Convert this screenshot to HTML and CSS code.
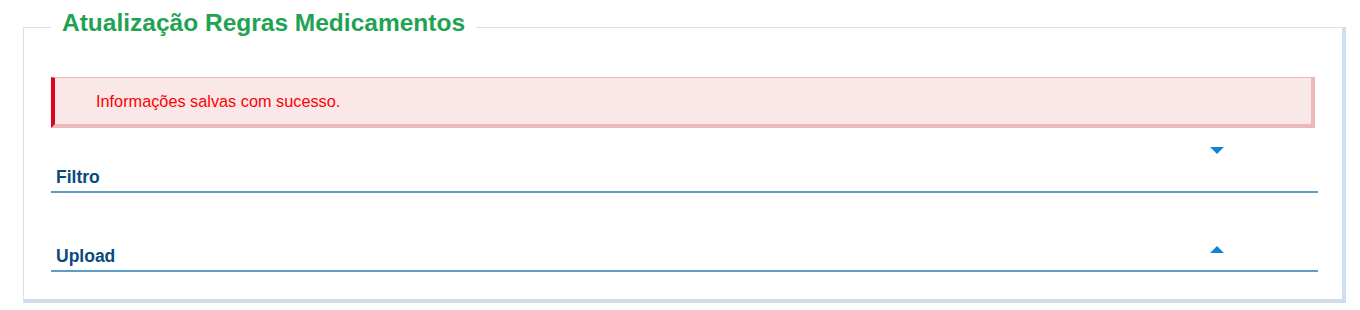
FILE: index.html
```html
<!DOCTYPE html>
<html lang="pt-BR">
<head>
    <meta charset="UTF-8">
    <meta name="viewport" content="width=device-width, initial-scale=1.0">
    <title>Atualização Regras Medicamentos</title>
    <link rel="stylesheet" href="styles.css">
</head>
<body>
    <fieldset class="panel">
        <legend>Atualização Regras Medicamentos</legend>

        <div class="alert">Informações salvas com sucesso.</div>

        <div class="section">
            <div class="section-head collapsed">
                <span class="section-title">Filtro</span>
                <span class="arrow arrow-down"></span>
            </div>
        </div>

        <div class="section">
            <div class="section-head">
                <span class="section-title">Upload</span>
                <span class="arrow arrow-up"></span>
            </div>
        </div>
    </fieldset>
</body>
</html>
```

FILE: styles.css
```css
body {
    margin: 0;
    font-family: 'Liberation Sans', Arial, sans-serif;
    background: #fff;
}

.panel {
    margin: 9px 14px 0 23px;
    padding: 0 24px 27px 27px;
    border-style: solid;
    border-width: 1px 4px 4px 1px;
    border-color: #dae1e7 #cfdeea #cfdeea #dae1e7;
    min-width: 0;
}

.panel legend {
    padding: 0 11px 9px;
    font-size: 24.5px;
    font-weight: bold;
    color: #1fa352;
}

.alert {
    margin: 31px 3px 0 0;
    padding: 14px 41px;
    font-size: 16.3px;
    line-height: 18px;
    color: #ff0000;
    background: #fae8e8;
    border-style: solid;
    border-width: 1px 4px 4px 4px;
    border-color: #ebb9b9 #ebb9b9 #ebb9b9 #e2001a;
}

.section {
    margin-top: 19px;
}

.section + .section {
    margin-top: 53px;
}

.section-head {
    display: flex;
    justify-content: space-between;
    align-items: flex-start;
    padding: 0 94px 4px 5px;
    border-bottom: 2px solid #5a9dc8;
}

.section-title {
    font-size: 17.5px;
    line-height: 20px;
    font-weight: bold;
    color: #0a4a7a;
}

.section-head.collapsed .section-title {
    padding-top: 20px;
}

.arrow {
    width: 0;
    height: 0;
    border-left: 7px solid transparent;
    border-right: 7px solid transparent;
}

.arrow-down {
    border-top: 7px solid #1583d3;
}

.arrow-up {
    border-bottom: 7px solid #1583d3;
}
```
